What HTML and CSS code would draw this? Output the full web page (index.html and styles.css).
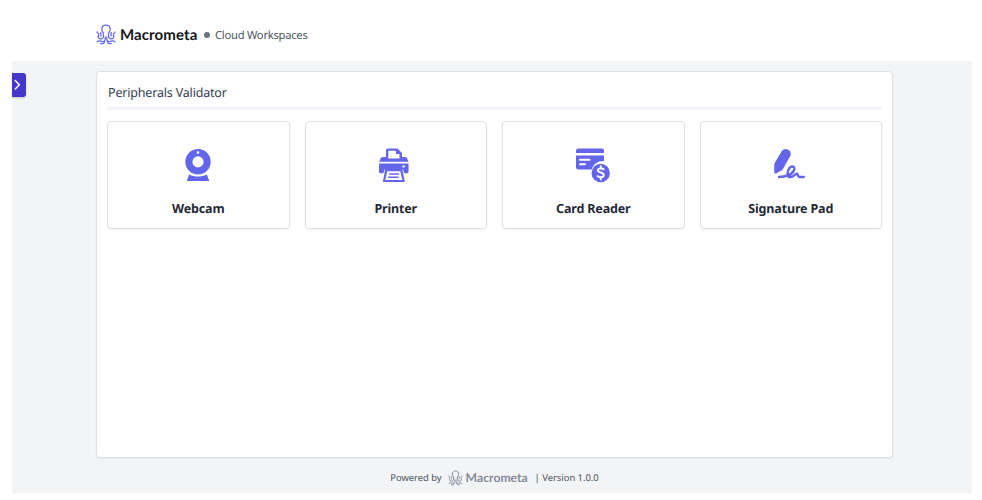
FILE: index.html
```html
<!DOCTYPE html>
<html lang="en">
<head>
<meta charset="utf-8">
<title>Peripherals Validator</title>
<link rel="stylesheet" href="styles.css">
</head>
<body>
<svg class="defs" width="0" height="0" aria-hidden="true">
  <symbol id="octopus" viewBox="0 0 20 21">
    <g fill="none" stroke="currentColor" stroke-width="1.250" stroke-linecap="round" stroke-linejoin="round">
      <path d="M7.500 9.500C6.600 8 5.800 7 5.800 5.200C5.800 2.700 7.500 1.100 10 1.100s4.200 1.600 4.200 4.100C14.200 7 13.400 8 12.500 9.500"/>
      <path d="M7.500 9.500v3c0 2.300-3.300 3-4.900 1.500-1.500-1.500.1-2.600.1-3.700 0-1.200-1.800-1.100-1.600-2.500M12.500 9.500v3c0 2.300 3.300 3 4.900 1.500 1.500-1.500-.1-2.600-.1-3.700 0-1.200 1.800-1.100 1.600-2.500"/>
      <path d="M5.100 12.100c-1-1 .5-2.300-.5-3.500M14.900 12.100c1-1-.5-2.300.5-3.500"/>
      <path d="M9.200 13v2c0 2.200-2.400 3-4.400 2.200-1.400-.5-2.900-.4-3.600.6M10.800 13v2c0 2.200 2.400 3 4.400 2.200 1.400-.5 2.900-.4 3.600.6M8.700 17.500c-.5 2-2.300 2.500-4.100 1.900M11.300 17.500c.5 2 2.300 2.500 4.100 1.900"/>
    </g>
  </symbol>
</svg>
<div class="app">
  <header class="header">
    <svg class="mark"><use href="#octopus"/></svg>
    <span class="wordmark">Macrometa</span>
    <span class="dot"></span>
    <span class="product">Cloud Workspaces</span>
  </header>
  <div class="workspace">
    <button class="drawer" aria-label="Open menu"><svg width="14" height="24" viewBox="0 0 14 24"><path d="M3.300 7.500l4 4.200-4 4.200" fill="none" stroke="#fff" stroke-width="1.500" stroke-linecap="round" stroke-linejoin="round"/></svg></button>
    <main class="panel">
      <h1 class="title">Peripherals Validator</h1>
      <div class="cards">
        <section class="card">
          <svg class="icon" viewBox="0 0 36 36"><path fill="currentColor" fill-rule="evenodd" d="M18 2a12.700 12.700 0 1 1 0 25.400A12.700 12.700 0 0 1 18 2zm0 7.300a5.600 5.600 0 1 0 0 11.200 5.600 5.600 0 0 0 0-11.200zm0-5a1.300 1.300 0 1 0 0 2.600 1.300 1.300 0 0 0 0-2.600z"/><path fill="currentColor" d="M9.200 27.400c5.200 2.700 12.400 2.700 17.600 0L29.300 34H6.700z"/></svg>
          <h2>Webcam</h2>
        </section>
        <section class="card">
          <svg class="icon" viewBox="0 0 36 36"><path fill="currentColor" fill-rule="evenodd" d="M8 10V3.500q0-2 2-2h9.500L24 6v4h3q1.500 0 2.200 1.500l1.300 3.200H1.200L2.500 11.500Q3.200 10 4.700 10zM10.300 3.800v7.700h11.200V7h-3.500V3.800zM1 16.500h29.500v8.200q0 1.600-1.600 1.600h-2.600l-1.500-4H6.800l-1.500 4H2.600Q1 26.300 1 24.700zM24.500 18.500v2h2.200v-2z"/><path fill="currentColor" fill-rule="evenodd" d="M7.300 22h17l2.500 13H4.800zM9.300 24.200L7.200 33h17.200L22.300 24.200z"/><path d="M11.700 27h8.800M10.700 30.200h9.500" stroke="currentColor" stroke-width="1.500" stroke-linecap="round"/></svg>
          <h2>Printer</h2>
        </section>
        <section class="card">
          <svg class="icon" viewBox="0 0 36 36"><path fill="currentColor" d="M1 6V3.800q0-2.300 2.300-2.300h23.500q2.200 0 2.200 2.300V6zM1 8.500h28V14c-6-.3-10.700 3.200-12.300 8.500H3.500Q1 22.500 1 20z"/><path d="M5 12.800h9.500M5 17.300h5" stroke="#fff" stroke-width="2" stroke-linecap="round"/><circle cx="25.700" cy="26" r="9.200" fill="currentColor"/><path d="M28.800 22.300c-1.200-1.300-5.700-1.500-5.900 1-.2 2.600 5.900 1.800 5.900 4.800 0 2.700-4.700 2.600-6.200 1M25.800 19.300v2.300M25.800 30v2.500" fill="none" stroke="#fff" stroke-width="1.900" stroke-linecap="round"/></svg>
          <h2>Card Reader</h2>
        </section>
        <section class="card">
          <svg class="icon" viewBox="0 0 36 36"><path fill="currentColor" d="M8.700 4.200Q11 .9 14.800 2.500t2.700 6L10.200 21.500q-.5 1-1.500 1.800L3 26.400q-1.800.6-1.800-1l.1-7.500q0-1.300.7-2.500z"/><path d="M6 30c6 0 14.600-2.500 15.300-8 .3-2.900-3.500-3.300-5.200-.5-2 3.500-2.300 8.600 1.200 8.600 3.600 0 4.500-3.300 6.500-3.300 1.500 0 .7 2.900 2.300 3.100h4.600" fill="none" stroke="currentColor" stroke-width="2.500" stroke-linecap="round" stroke-linejoin="round"/></svg>
          <h2>Signature Pad</h2>
        </section>
      </div>
    </main>
    <footer class="footer">
      <span class="powered">Powered by</span>
      <svg class="mark small"><use href="#octopus"/></svg>
      <span class="wordmark small">Macrometa</span>
      <span class="version">| Version 1.0.0</span>
    </footer>
  </div>
</div>
</body>
</html>
```
FILE: styles.css
```css
* { box-sizing: border-box; }
body { margin: 0; background: #fff; color: #374151; font-family: "Noto Sans", sans-serif; text-rendering: geometricPrecision; }
.defs { position: absolute; }
.app { width: 960px; height: 493px; margin-left: 12px; display: flex; flex-direction: column; }
.header { height: 61px; flex: none; display: flex; align-items: center; padding: 8px 0 0 84px; white-space: nowrap; }
.mark { width: 20px; height: 21px; color: #6366f1; flex: none; }
.wordmark { width: 77px; margin-left: 4px; font: 700 15px/20px Lato, sans-serif; letter-spacing: .1px; color: #151519; }
.dot { width: 6px; height: 6px; margin: 0 5px 0 7px; border-radius: 50%; background: #6b7280; }
.product { font-size: 11.200px; line-height: 19px; padding-top: 1px; letter-spacing: -.25px; color: #4b5563; }
.workspace { position: relative; flex: 1; display: flex; flex-direction: column; background: #f3f4f6; padding: 10px 79px 0 84px; }
.drawer { position: absolute; left: 0; top: 12px; width: 14px; height: 24px; padding: 0; border: 0; border-radius: 0 3px 3px 0; background: #4338ca; box-shadow: 0 1px 2px #0003; }
.drawer svg { display: block; }
.panel { height: 387px; background: #fff; border: 1px solid #dfe1e6; border-radius: 4px; padding: 10px; box-shadow: 0 1px 2px #0000000d; }
.title { margin: 0; height: 28px; padding-left: 1px; font-size: 12.500px; line-height: 22px; font-weight: 400; letter-spacing: -.18px; border-bottom: 3px solid #f1f5f9; color: #374151; }
.cards { margin-top: 11px; display: grid; grid-template-columns: repeat(4, 1fr); gap: 15px; }
.card { height: 108px; display: flex; flex-direction: column; align-items: center; border: 1px solid #dddfe4; border-radius: 4px; padding-top: 25px; box-shadow: 0 1px 2px #0000000d; }
.icon { width: 36px; height: 36px; color: #6366ea; }
.card h2 { margin: 16px 0 0; font-size: 12.500px; line-height: 20px; font-weight: 700; letter-spacing: -.15px; color: #1f2937; }
.footer { display: flex; align-items: center; justify-content: center; height: 35px; padding-top: 4px; font-size: 9.400px; color: #4b5563; white-space: nowrap; }
.mark.small { width: 15px; height: 16px; margin-left: 6px; color: #858b9b; }
.wordmark.small { width: 62px; margin-left: 3px; padding-top: 1px; font-size: 12.200px; letter-spacing: 0; color: #858b9b; }
.version { margin-left: 7px; }
```
